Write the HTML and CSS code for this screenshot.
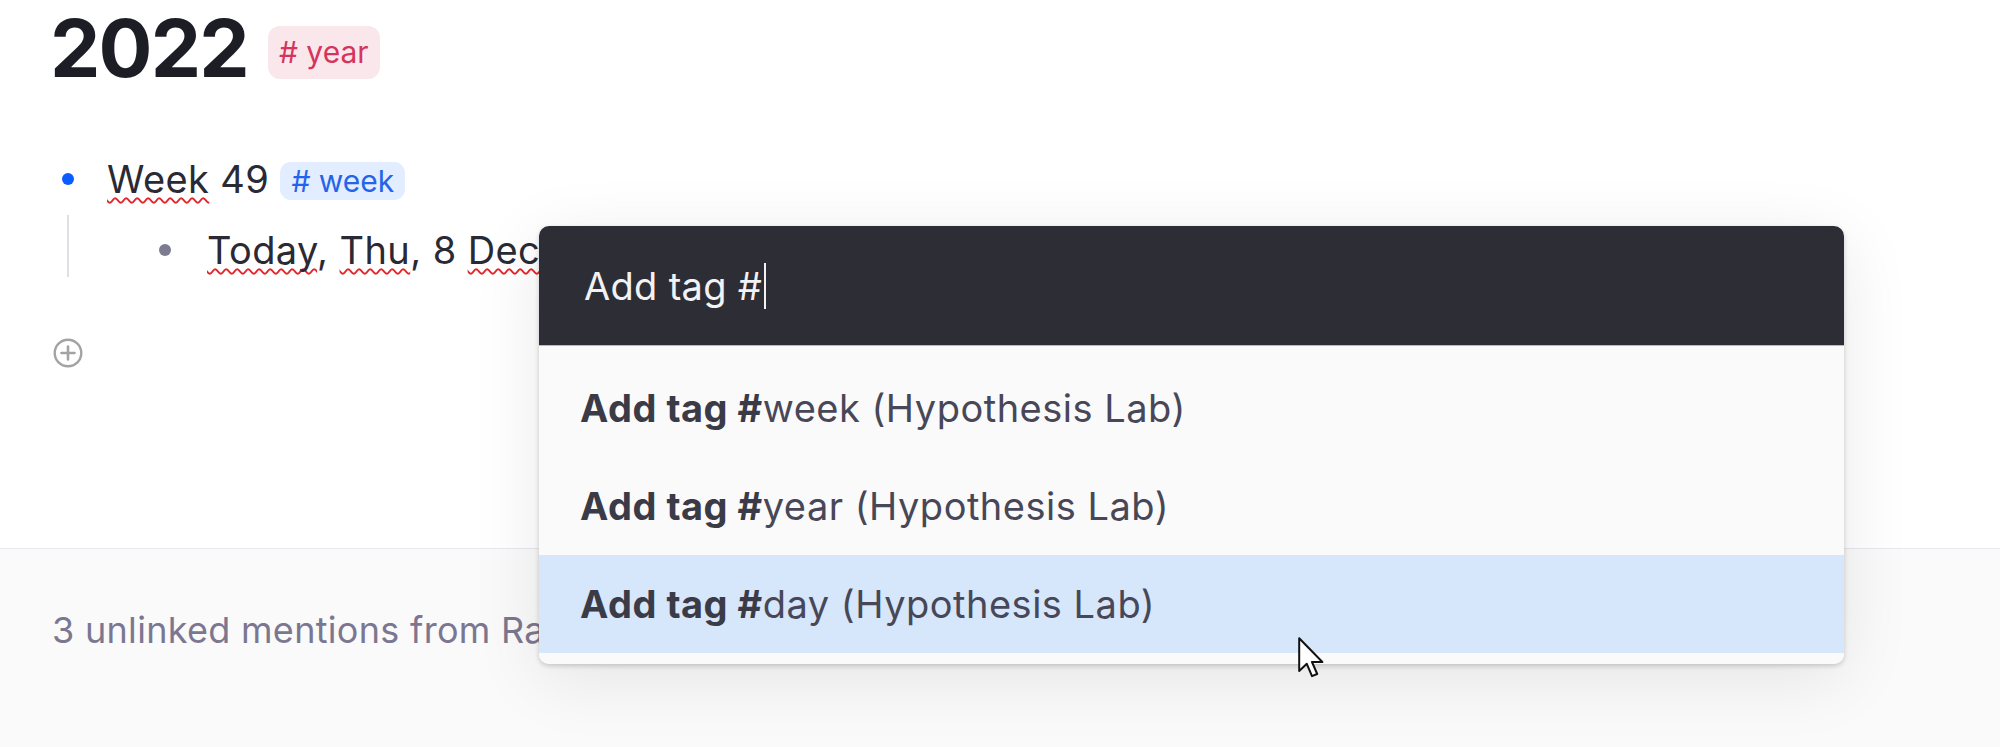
FILE: index.html
```html
<!DOCTYPE html>
<html lang="en">
<head>
<meta charset="utf-8">
<title>2022</title>
<link rel="stylesheet" href="styles.css">
</head>
<body>
<div class="page">
  <section class="top">
    <div class="title-row">
      <h1 class="title">2022</h1>
      <span class="tag tag-year"># year</span>
    </div>
    <div class="outline">
      <div class="row row-1">
        <span class="bullet-col"><span class="bullet bullet-blue"></span></span>
        <span class="row-text"><span class="spell">Week</span> 49 <span class="tag tag-week"># week</span></span>
      </div>
      <div class="children">
        <div class="row row-2">
          <span class="bullet-col"><span class="bullet bullet-grey"></span></span>
          <span class="row-text"><span class="spell">Today</span>, <span class="spell">Thu</span>, 8 <span class="spell">Dec</span></span>
        </div>
      </div>
      <div class="add-btn">
        <svg viewBox="0 0 30 30" width="30" height="30"><circle cx="15" cy="15" r="13.3" fill="none" stroke="#a3a3a3" stroke-width="2.4"/><path d="M15 8.5v13M8.5 15h13" stroke="#a3a3a3" stroke-width="2.6" stroke-linecap="round"/></svg>
      </div>
    </div>
  </section>
  <section class="bottom">
    <p class="mentions">3 unlinked mentions from Ra</p>
  </section>

  <div class="popup">
    <div class="popup-head"><span class="popup-input">Add tag #</span><span class="caret"></span></div>
    <div class="popup-list">
      <div class="item"><b>Add tag #</b>week (Hypothesis Lab)</div>
      <div class="item"><b>Add tag #</b>year (Hypothesis Lab)</div>
      <div class="item item-active"><b>Add tag #</b>day (Hypothesis Lab)</div>
    </div>
  </div>

  <svg class="cursor" viewBox="0 0 13 21" width="26" height="42"><path d="M0.6 0.6 L0.6 17 L4.4 13.4 L7 19.6 L9.6 18.5 L7 12.5 L12.2 12.5 Z" fill="#fff" stroke="#111" stroke-width="1" stroke-linejoin="round"/></svg>
</div>
</body>
</html>
```

FILE: styles.css
```css
* { box-sizing: border-box; }
html, body { margin: 0; padding: 0; }
body {
  font-family: Inter, "Noto Sans", "Liberation Sans", sans-serif;
  color: #2a2a35;
  background: #fafafa;
  width: 2000px;
  height: 747px;
  overflow: hidden;
}
.page {
  position: relative;
  width: 2000px;
  height: 747px;
  display: flex;
  flex-direction: column;
}
.top {
  height: 548px;
  background: #ffffff;
  padding-left: 50px;
  flex: none;
}
.title-row {
  display: flex;
  align-items: center;
  height: 96px;
  gap: 20px;
}
.title {
  margin: 0;
  font-size: 80px;
  line-height: 96px;
  font-weight: 700;
  color: #1d1d26;
  letter-spacing: -1.8px;
}
.tag {
  display: inline-block;
  border-radius: 12px;
  font-weight: 400;
  letter-spacing: 0;
}
.tag-year {
  margin-top: 9px;
  height: 53px;
  line-height: 53px;
  padding: 0 11px;
  font-size: 30px;
  background: #f9e7eb;
  color: #d3355c;
}
.tag-week {
  height: 38px;
  line-height: 38px;
  padding: 0 11px;
  font-size: 30px;
  border-radius: 11px;
  background: #e2edff;
  color: #2563eb;
  vertical-align: 1px;
}
.outline { margin-top: 47px; }
.row {
  display: flex;
  align-items: center;
  font-size: 38px;
  letter-spacing: 0.4px;
  color: #2a2a35;
}
.row-1 { height: 72px; }
.bullet-col {
  width: 36px;
  display: flex;
  justify-content: center;
  align-items: center;
  flex: none;
}
.row-1 .bullet-col { margin-right: 21px; }
.bullet {
  display: block;
  border-radius: 50%;
}
.bullet-blue { width: 12px; height: 12px; background: #0b5cff; }
.bullet-grey { width: 12px; height: 12px; background: #7d7b90; }
.spell {
  text-decoration: underline wavy #e3262b;
  text-decoration-thickness: 1.5px;
  text-underline-offset: 4px;
  text-decoration-skip-ink: none;
}
.children {
  margin-left: 17px;
  border-left: 2px solid #dfdfe6;
  height: 62px;
  padding-left: 78px;
}
.row-2 { height: 62px; padding-top: 8px; }
.row-2 .bullet-col { margin-right: 24px; }
.add-btn {
  margin-top: 61px;
  margin-left: 3px;
  width: 30px;
  height: 30px;
}
.add-btn svg { display: block; }
.bottom {
  flex: 1;
  border-top: 1px solid #e8e8ee;
  background: #fafafa;
  padding-left: 52px;
  padding-top: 59px;
}
.mentions {
  margin: 0;
  font-size: 36px;
  letter-spacing: 0.3px;
  line-height: 44px;
  color: #7c7790;
}
.popup {
  position: absolute;
  left: 539px;
  top: 226px;
  width: 1305px;
  border-radius: 10px;
  overflow: hidden;
  background: #fcfcfc;
  box-shadow: 0 2px 5px rgba(0,0,0,0.18), 0 14px 70px rgba(0,0,0,0.09);
}
.popup-head {
  height: 120px;
  background: #2d2d36;
  display: flex;
  align-items: center;
  padding-left: 45px;
  border-bottom: 1px solid #b9b9be;
}
.popup-input {
  font-size: 38px;
  letter-spacing: 0.3px;
  color: #f2f2f4;
  line-height: 46px;
}
.caret {
  display: inline-block;
  width: 2px;
  height: 46px;
  background: #f2f2f4;
  margin-left: 2px;
}
.popup-list {
  padding: 13px 0 11px;
  background: #fafafa;
}
.item {
  height: 98px;
  line-height: 98px;
  padding-left: 41px;
  font-size: 38px;
  letter-spacing: 0.5px;
  color: #474758;
}
.item b {
  font-weight: 700;
  color: #3b3b48;
}
.item-active { background: #d6e6fb; }
.cursor {
  position: absolute;
  left: 1298px;
  top: 637px;
}
```
